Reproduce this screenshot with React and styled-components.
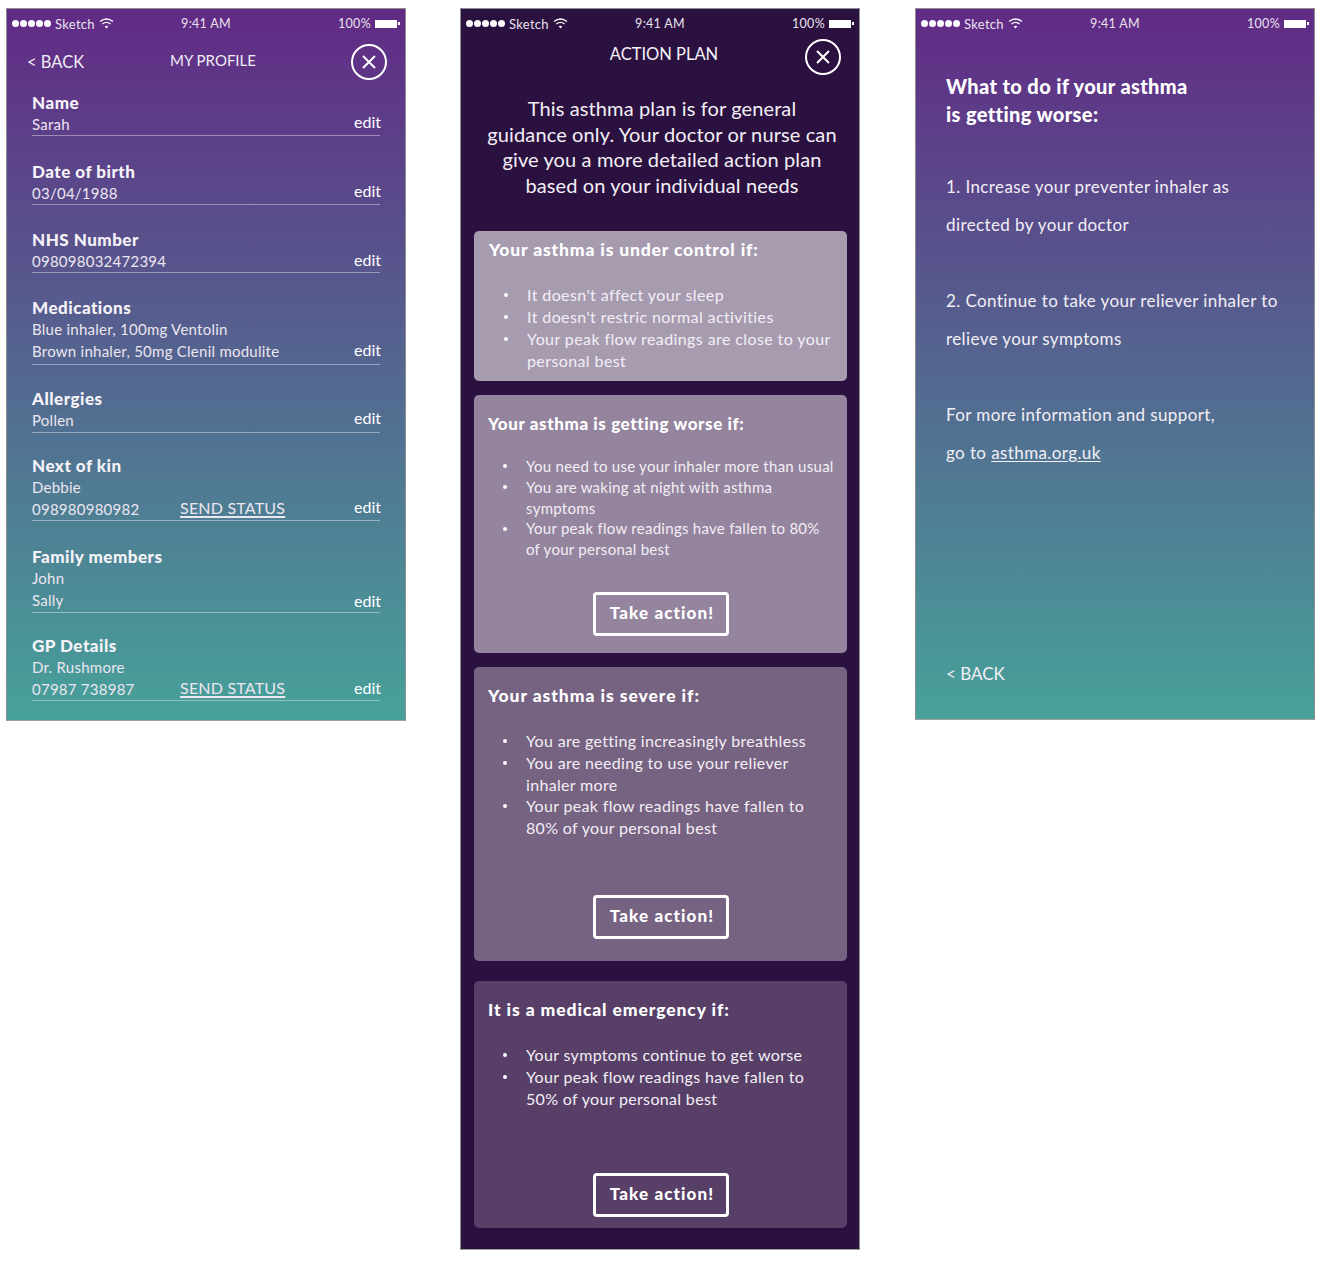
import React from 'react'
import styled, { createGlobalStyle } from 'styled-components'

const Global = createGlobalStyle`
    html, body {
        margin: 0;
        padding: 0;
        background: #fff;
    }
    body {
        font-family: Lato, "Open Sans", sans-serif;
        color: #fff;
    }
    * {
        box-sizing: border-box;
    }
`

const Page = styled.div`
    display: flex;
    align-items: flex-start;
    width: 1322px;
    height: 1262px;
    padding: 8px 0 0 6px;
`

const Phone = styled.div`
    display: flex;
    flex-direction: column;
    flex: none;
    width: 400px;
    height: ${p => p.$h}px;
    margin-right: ${p => p.$mr || 0}px;
    border: 1px solid #8d8d8d;
    border-bottom-color: #a0a0a0;
    background: ${p => p.$dark ? '#2b1140' : 'linear-gradient(to bottom, #612a85 0%, #47a19a 100%)'};
`

const Status = styled.div`
    display: grid;
    grid-template-columns: 1fr 1fr 1fr;
    align-items: center;
    height: 29px;
    padding: 0 5px 0 5px;
    font-size: 12.5px;
    color: #e9e2ee;
    letter-spacing: 0.3px;
`

const StatusLeft = styled.div`
    display: flex;
    align-items: center;
    gap: 4px;
    font-size: 13px;
`

const Dots = styled.div`
    display: flex;
    gap: 1px;
`

const Dot = styled.span`
    width: 7px;
    height: 7px;
    border-radius: 50%;
    background: #fff;
`

const StatusMid = styled.div`
    text-align: center;
`

const StatusRight = styled.div`
    display: flex;
    justify-content: flex-end;
    align-items: center;
    gap: 4px;
`

const Battery = styled.div`
    display: flex;
    align-items: center;
    gap: 1px;
    &::before {
        content: '';
        display: block;
        width: 22px;
        height: 8px;
        background: #fff;
    }
    &::after {
        content: '';
        display: block;
        width: 2px;
        height: 3px;
        background: #fff;
    }
`

const StatusBar = () => (
    <Status>
        <StatusLeft>
            <Dots>{[0, 1, 2, 3, 4].map(i => <Dot key={i} />)}</Dots>
            <span>Sketch</span>
            <svg width="15" height="11" viewBox="0 0 15 11" fill="none" stroke="#fff" strokeWidth="1.3">
                <path d="M1 3.6C5 .4 10 .4 14 3.6" />
                <path d="M3.4 6C6 4 9 4 11.6 6" />
                <path d="M7.5 10.4 5.6 8.3C6.8 7.5 8.2 7.5 9.4 8.3Z" fill="#fff" stroke="none" />
            </svg>
        </StatusLeft>
        <StatusMid>9:41 AM</StatusMid>
        <StatusRight>
            <span>100%</span>
            <Battery />
        </StatusRight>
    </Status>
)

const CloseWrap = styled.div`
    width: 36px;
    height: 36px;
    flex: none;
`

const CloseIcon = () => (
    <CloseWrap>
        <svg width="36" height="36" viewBox="0 0 36 36" fill="none" stroke="#fff" strokeWidth="2">
            <circle cx="18" cy="18" r="17" />
            <path d="M12 12 24 24M24 12 12 24" />
        </svg>
    </CloseWrap>
)

const ProfileHeader = styled.div`
    display: grid;
    grid-template-columns: 1fr auto 1fr;
    align-items: center;
    height: 42px;
    padding: 0 18px 0 20px;
    margin-top: 3px;
    font-size: 17px;
    color: #f1ecf4;
`

const BackLink = styled.div`
    font-size: 16.5px;
    color: #f1ecf4;
`

const HeaderTitle = styled.div`
    position: relative;
    top: -2px;
    left: 6px;
    font-size: 15px;
`

const HeaderClose = styled.div`
    display: flex;
    justify-content: flex-end;
`

const Rows = styled.div`
    display: flex;
    flex-direction: column;
    padding: 0 25px;
`

const Row = styled.div`
    display: flex;
    align-items: flex-end;
    height: ${p => p.$h}px;
    border-bottom: 1px solid rgba(255, 255, 255, 0.4);
    padding-bottom: ${p => p.$pad}px;
`

const RowBody = styled.div`
    flex: 1;
    min-width: 0;
`

const Label = styled.div`
    font-size: 17px;
    font-weight: 900;
    line-height: 22px;
    letter-spacing: 0.5px;
    color: #f6f3f8;
`

const Value = styled.div`
    display: flex;
    font-size: 15px;
    line-height: 21.5px;
    color: #ece6f0;
    letter-spacing: 0.25px;
`

const ValueText = styled.span`
    width: 148px;
    flex: none;
    white-space: nowrap;
`

const SendStatus = styled.span`
    position: relative;
    top: -2px;
    font-size: 16px;
    text-decoration: underline;
    text-decoration-thickness: 2px;
    text-underline-offset: 2px;
    letter-spacing: 0.2px;
`

const Edit = styled.div`
    font-size: 16px;
    line-height: 21px;
    flex: none;
    margin-right: -1px;
    position: relative;
    top: ${p => p.$top || 0}px;
`

const profile = [
    { h: 53, pad: 0, label: 'Name', lines: ['Sarah'], edit: -3 },
    { h: 69, pad: 0, label: 'Date of birth', lines: ['03/04/1988'], edit: -3 },
    { h: 68, pad: 0, label: 'NHS Number', lines: ['098098032472394'], edit: -2 },
    { h: 92, pad: 2, label: 'Medications', lines: ['Blue inhaler, 100mg Ventolin', 'Brown inhaler, 50mg Clenil modulite'], edit: -2 },
    { h: 68, pad: 1, label: 'Allergies', lines: ['Pollen'], edit: -3 },
    { h: 88, pad: 0, label: 'Next of kin', lines: ['Debbie', '098980980982'], send: true, edit: -3 },
    { h: 92, pad: 1, label: 'Family members', lines: ['John', 'Sally'], edit: 0 },
    { h: 88, pad: 0, label: 'GP Details', lines: ['Dr. Rushmore', '07987 738987'], send: true, edit: -2 },
]

const ProfileScreen = () => (
    <Phone $h={713} $mr={54}>
        <StatusBar />
        <ProfileHeader>
            <BackLink>&lt; BACK</BackLink>
            <HeaderTitle>MY PROFILE</HeaderTitle>
            <HeaderClose><CloseIcon /></HeaderClose>
        </ProfileHeader>
        <Rows>
            {profile.map(r => (
                <Row key={r.label} $h={r.h} $pad={r.pad}>
                    <RowBody>
                        <Label>{r.label}</Label>
                        {r.lines.map((line, i) => (
                            <Value key={line}>
                                <ValueText>{line}</ValueText>
                                {r.send && i === r.lines.length - 1 && <SendStatus>SEND STATUS</SendStatus>}
                            </Value>
                        ))}
                    </RowBody>
                    <Edit $top={r.edit}>edit</Edit>
                </Row>
            ))}
        </Rows>
    </Phone>
)

const PlanHeader = styled.div`
    display: flex;
    align-items: center;
    justify-content: center;
    position: relative;
    height: 36px;
    font-size: 16.5px;
    margin-top: -1px;
`

const PlanTitle = styled.div`
    position: relative;
    top: -1px;
    left: 4px;
    color: #f6f3f8;
`

const PlanClose = styled.div`
    position: absolute;
    right: 18px;
    top: 2px;
`

const Intro = styled.div`
    margin: 23px 0 0 4px;
    font-size: 20px;
    line-height: 25.5px;
    text-align: center;
    white-space: pre-line;
    letter-spacing: 0.12px;
    color: #f3eff5;
`

const Cards = styled.div`
    display: flex;
    flex-direction: column;
    padding: 0 12px 0 13px;
    margin-top: 33px;
`

const Card = styled.div`
    display: flex;
    flex-direction: column;
    height: ${p => p.$h}px;
    margin-bottom: ${p => p.$gap}px;
    padding: ${p => p.$top}px 14px 0 ${p => p.$left}px;
    border-radius: 5px;
    background: ${p => p.$bg};
`

const CardTitle = styled.div`
    font-size: ${p => p.$size}px;
    font-weight: 900;
    line-height: 22px;
    letter-spacing: ${p => p.$ls}px;
`

const Bullets = styled.ul`
    list-style: none;
    margin: ${p => p.$mt}px 0 0;
    padding: 0;
`

const Bullet = styled.li`
    position: relative;
    padding-left: 38px;
    font-size: ${p => p.$size}px;
    line-height: ${p => p.$lh}px;
    white-space: pre;
    letter-spacing: ${p => p.$ls}px;
    color: #f3eff5;
    &::before {
        content: '';
        position: absolute;
        left: 15px;
        top: ${p => p.$lh / 2 - 2}px;
        width: 4px;
        height: 4px;
        border-radius: 50%;
        background: #fff;
    }
`

const ActionButton = styled.div`
    align-self: center;
    display: flex;
    align-items: center;
    justify-content: center;
    width: 136px;
    height: 44px;
    margin-top: ${p => p.$mt}px;
    padding: 0 0 3px 3px;
    border: 3px solid #fff;
    border-radius: 4px;
    font-size: 17px;
    font-weight: 900;
    letter-spacing: 1.1px;
`

const cards = [
    {
        h: 150, gap: 14, top: 8, left: 15, bg: '#a79bb0', ts: 17.5, tl: 0.85, size: 16, lh: 22, ls: 0.4, mt: 23, title: 'Your asthma is under control if:',
        items: ["It doesn't affect your sleep", "It doesn't restric normal activities", 'Your peak flow readings are close to your\npersonal best'],
    },
    {
        h: 258, gap: 14, top: 18, left: 14, bg: '#94849e', ts: 17, tl: 0.6, size: 15, lh: 20.8, ls: 0.27, mt: 21, btn: 32, title: 'Your asthma is getting worse if:',
        items: ['You need to use your inhaler more than usual', 'You are waking at night with asthma\nsymptoms', 'Your peak flow readings have fallen to 80%\nof your personal best'],
    },
    {
        h: 294, gap: 20, top: 18, left: 14, bg: '#766281', ts: 17.5, tl: 0.95, size: 16, lh: 21.8, ls: 0.33, mt: 23, btn: 56, title: 'Your asthma is severe if:',
        items: ['You are getting increasingly breathless', 'You are needing to use your reliever\ninhaler more', 'Your peak flow readings have fallen to\n80% of your personal best'],
    },
    {
        h: 247, gap: 0, top: 18, left: 14, bg: '#573f68', ts: 17.5, tl: 0.9, size: 16, lh: 21.8, ls: 0.33, mt: 23, btn: 64, title: 'It is a medical emergency if:',
        items: ['Your symptoms continue to get worse', 'Your peak flow readings have fallen to\n50% of your personal best'],
    },
]

const PlanScreen = () => (
    <Phone $h={1242} $dark $mr={55}>
        <StatusBar />
        <PlanHeader>
            <PlanTitle>ACTION PLAN</PlanTitle>
            <PlanClose><CloseIcon /></PlanClose>
        </PlanHeader>
        <Intro>{'This asthma plan is for general\nguidance only. Your doctor or nurse can\ngive you a more detailed action plan\nbased on your individual needs'}</Intro>
        <Cards>
            {cards.map(c => (
                <Card key={c.title} $h={c.h} $gap={c.gap} $top={c.top} $left={c.left} $bg={c.bg}>
                    <CardTitle $size={c.ts} $ls={c.tl}>{c.title}</CardTitle>
                    <Bullets $mt={c.mt}>
                        {c.items.map(item => <Bullet key={item} $size={c.size} $lh={c.lh} $ls={c.ls}>{item}</Bullet>)}
                    </Bullets>
                    {c.btn && <ActionButton $mt={c.btn}>Take action!</ActionButton>}
                </Card>
            ))}
        </Cards>
    </Phone>
)

const Advice = styled.div`
    display: flex;
    flex-direction: column;
    flex: 1;
    padding: 34px 30px 35px 30px;
    color: #f3eff5;
`

const AdviceTitle = styled.div`
    font-size: 20px;
    font-weight: 900;
    line-height: 28px;
    letter-spacing: 0.36px;
    white-space: pre-line;
    color: #fff;
`

const AdviceText = styled.p`
    margin: ${p => p.$mt}px 0 0;
    font-size: 17px;
    line-height: 38px;
    letter-spacing: 0.4px;
`

const AdviceLink = styled.span`
    text-decoration: underline;
    text-underline-offset: 2px;
`

const AdviceBack = styled.div`
    margin-top: auto;
    font-size: 17px;
`

const AdviceScreen = () => (
    <Phone $h={712}>
        <StatusBar />
        <Advice>
            <AdviceTitle>{'What to do if your asthma\nis getting worse:'}</AdviceTitle>
            <AdviceText $mt={40}>1. Increase your preventer inhaler as<br />directed by your doctor</AdviceText>
            <AdviceText $mt={38}>2. Continue to take your reliever inhaler to<br />relieve your symptoms</AdviceText>
            <AdviceText $mt={38}>For more information and support,<br /><span>go to </span><AdviceLink>asthma.org.uk</AdviceLink></AdviceText>
            <AdviceBack>&lt; BACK</AdviceBack>
        </Advice>
    </Phone>
)

export default function App() {
    return (
        <Page>
            <Global />
            <ProfileScreen />
            <PlanScreen />
            <AdviceScreen />
        </Page>
    )
}
